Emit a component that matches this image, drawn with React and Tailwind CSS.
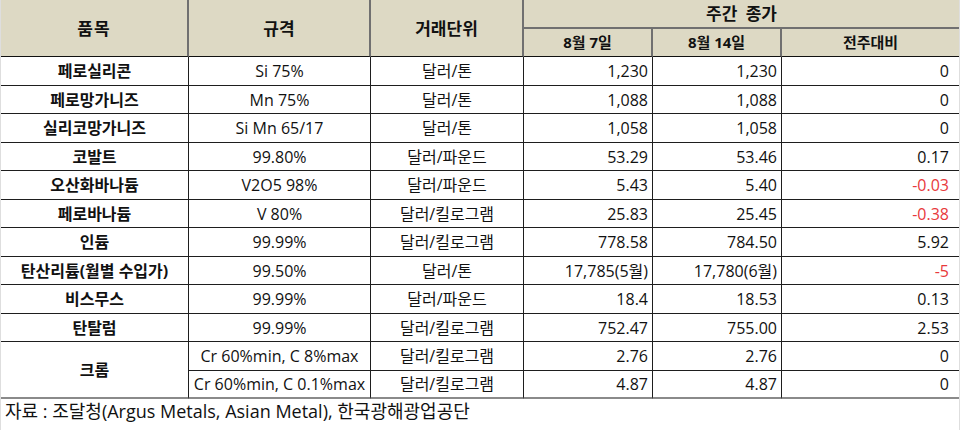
import React from "react";

const rows = [
  ["페로실리콘", "Si 75%", "달러/톤", "1,230", "1,230", "0"],
  ["페로망가니즈", "Mn 75%", "달러/톤", "1,088", "1,088", "0"],
  ["실리코망가니즈", "Si Mn 65/17", "달러/톤", "1,058", "1,058", "0"],
  ["코발트", "99.80%", "달러/파운드", "53.29", "53.46", "0.17"],
  ["오산화바나듐", "V2O5 98%", "달러/파운드", "5.43", "5.40", "-0.03"],
  ["페로바나듐", "V 80%", "달러/킬로그램", "25.83", "25.45", "-0.38"],
  ["인듐", "99.99%", "달러/킬로그램", "778.58", "784.50", "5.92"],
  ["탄산리튬(월별 수입가)", "99.50%", "달러/톤", "17,785(5월)", "17,780(6월)", "-5"],
  ["비스무스", "99.99%", "달러/파운드", "18.4", "18.53", "0.13"],
  ["탄탈럼", "99.99%", "달러/킬로그램", "752.47", "755.00", "2.53"],
];

const font = { fontFamily: '"Open Sans", "Noto Sans CJK KR", sans-serif' };

export default function App() {
  const hb = "border-[#707070]";
  const cell = "p-0 border-r border-b border-[#1e1e1e]";
  return (
    <div
      className="w-[960px] h-[430px] bg-white border-x border-[#dedede] text-[16px] text-[#111] overflow-hidden"
      style={font}
    >
      <table className="w-[958px] table-fixed border-separate border-spacing-0 leading-none">
        <colgroup>
          <col className="w-[188px]" />
          <col className="w-[182px]" />
          <col className="w-[153px]" />
          <col className="w-[129px]" />
          <col className="w-[129px]" />
          <col className="w-[177px]" />
        </colgroup>
        <thead className="bg-[#ddd9c4] font-bold">
          <tr className="h-[29px] text-[17px]">
            <th rowSpan={2} className={`p-0 border-r-2 ${hb} border-b border-b-[#111] tracking-[1px]`}>품목</th>
            <th rowSpan={2} className={`p-0 border-r-2 ${hb} border-b border-b-[#111]`}>규격</th>
            <th rowSpan={2} className={`p-0 border-r-2 ${hb} border-b border-b-[#111]`}>거래단위</th>
            <th colSpan={3} className={`p-0 border-b-2 ${hb}`} style={{ wordSpacing: "4px" }}>주간 종가</th>
          </tr>
          <tr className="h-[28px] text-[15px]">
            <th className={`p-0 border-r-2 ${hb} border-b border-b-[#111]`}>8월 7일</th>
            <th className={`p-0 border-r-2 ${hb} border-b border-b-[#111]`}>8월 14일</th>
            <th className="p-0 border-b border-b-[#111]">전주대비</th>
          </tr>
        </thead>
        <tbody>
          {rows.map((r, i) => (
            <tr key={i} className={i % 2 === 0 ? "h-[29px]" : "h-[28px]"}>
              <td className={`${cell} text-center font-bold`}>{r[0]}</td>
              <td className={`${cell} text-center`}>{r[1]}</td>
              <td className={`${cell} text-center`}>{r[2]}</td>
              <td className={`${cell} text-right pr-[4px]`}>{r[3]}</td>
              <td className={`${cell} text-right pr-[4px]`}>{r[4]}</td>
              <td
                className={`p-0 border-b border-[#1e1e1e] text-right pr-[10px] ${
                  r[5].startsWith("-") ? "text-[#e8393b]" : ""
                }`}
              >
                {r[5]}
              </td>
            </tr>
          ))}
          <tr className="h-[29px]">
            <td rowSpan={2} className="p-0 border-r border-b-2 border-r-[#1e1e1e] border-b-[#8a8a8a] text-center font-bold">
              크롬
            </td>
            <td className={`${cell} text-center`}>Cr 60%min, C 8%max</td>
            <td className={`${cell} text-center`}>달러/킬로그램</td>
            <td className={`${cell} text-right pr-[4px]`}>2.76</td>
            <td className={`${cell} text-right pr-[4px]`}>2.76</td>
            <td className="p-0 border-b border-[#1e1e1e] text-right pr-[10px]">0</td>
          </tr>
          <tr className="h-[28px]">
            <td className="p-0 border-r border-r-[#1e1e1e] border-b-2 border-b-[#8a8a8a] text-center whitespace-nowrap">Cr 60%min, C 0.1%max</td>
            <td className="p-0 border-r border-r-[#1e1e1e] border-b-2 border-b-[#8a8a8a] text-center">달러/킬로그램</td>
            <td className="p-0 border-r border-r-[#1e1e1e] border-b-2 border-b-[#8a8a8a] text-right pr-[4px]">4.87</td>
            <td className="p-0 border-r border-r-[#1e1e1e] border-b-2 border-b-[#8a8a8a] text-right pr-[4px]">4.87</td>
            <td className="p-0 border-b-2 border-b-[#8a8a8a] text-right pr-[10px]">0</td>
          </tr>
        </tbody>
      </table>
      <div className="pl-[4px] pt-[3px] text-[18px] leading-none whitespace-nowrap">
        자료 : 조달청(Argus Metals, Asian Metal), 한국광해광업공단
      </div>
    </div>
  );
}
